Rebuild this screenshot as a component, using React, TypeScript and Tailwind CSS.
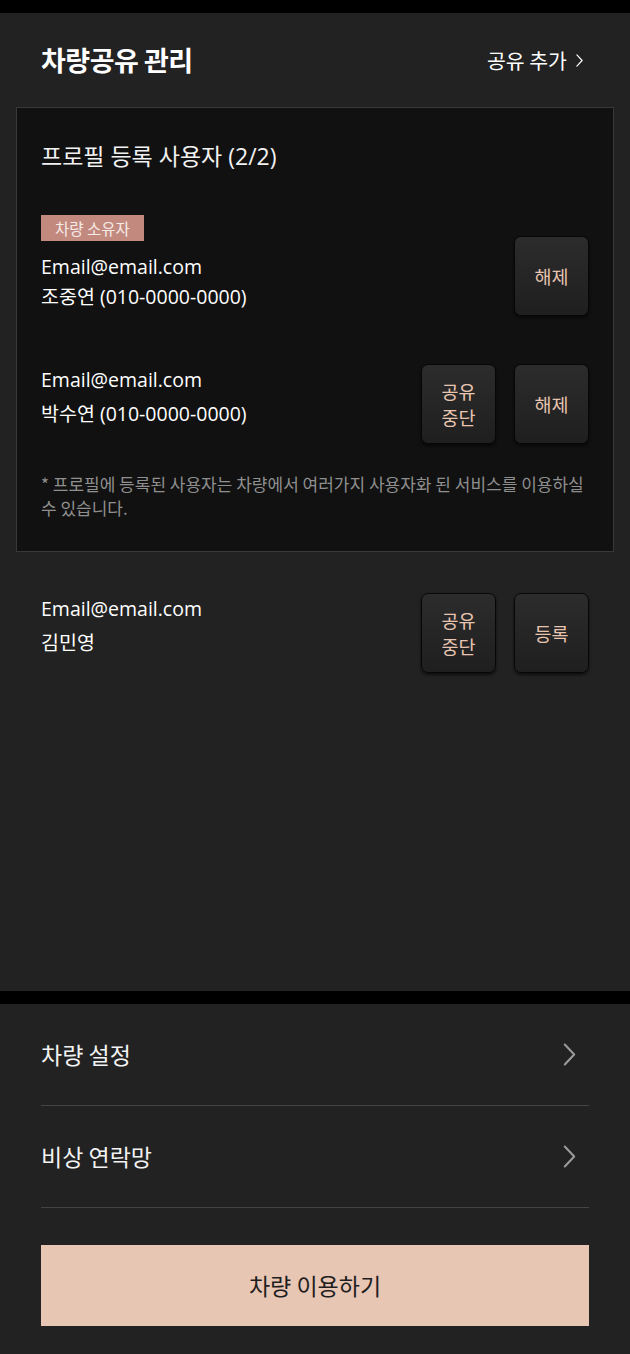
import React from "react";

const KR = { fontFamily: '"Noto Sans CJK KR", sans-serif' };
const MIX = { fontFamily: '"Open Sans", "Noto Sans CJK KR", sans-serif' };

function Btn({ lines }: { lines: string[] }) {
  return (
    <div
      className="w-[75px] h-[80px] rounded-[7px] border border-[#070707] bg-gradient-to-b from-[#2c2c2c] to-[#1f1f1f] shadow-[0_2px_3px_rgba(0,0,0,0.6)] flex flex-col items-center justify-center text-[18.5px] leading-[26px] text-[#e8c5b1]"
      style={KR}
    >
      {lines.map((l) => (
        <span key={l}>{l}</span>
      ))}
    </div>
  );
}

function Chevron({ cls }: { cls: string }) {
  return (
    <svg className={cls} viewBox="0 0 12 22" fill="none">
      <path d="M1.5 1.5 L10.5 11 L1.5 20.5" stroke="currentColor" strokeWidth="2" strokeLinecap="round" strokeLinejoin="round" />
    </svg>
  );
}

export default function App() {
  return (
    <div className="w-[630px] min-h-[1354px] bg-[#222222] text-white flex flex-col">
      <div className="h-[13px] bg-black" />
      <div className="h-[978px] bg-[#222222] flex flex-col">
        <div className="flex items-center justify-between pl-[41px] pr-[47px] pt-[29px] h-[94px] pb-[29px]">
          <h1 className="text-[27px] font-bold leading-[36px] tracking-[-0.5px]" style={KR}>
            차량공유 관리
          </h1>
          <div className="flex items-center gap-[9px] text-[20.5px] leading-[30px]" style={KR}>
            <span>공유 추가</span>
            <Chevron cls="w-[7px] h-[13px] text-white" />
          </div>
        </div>

        <div className="mx-[16px] border border-[#383838] bg-[#111111] pt-[33px] pb-[31px] px-[24px]">
          <div className="text-[23px] leading-[30px] text-[#f2f2f2]" style={MIX}>
            프로필 등록 사용자 (2/2)
          </div>

          <div className="mt-[44px] flex justify-between">
            <div className="flex flex-col">
              <span className="self-start h-[26px] px-[14px] bg-[#c28a7e] text-[15.5px] leading-[26px] text-[#f6ebe8]" style={KR}>
                차량 소유자
              </span>
              <div className="mt-[11px] text-[19.5px] leading-[30px]" style={MIX}>
                Email@email.com
              </div>
              <div className="text-[19.5px] leading-[30px]" style={MIX}>
                조중연 (010-0000-0000)
              </div>
            </div>
            <div className="mt-[21px]">
              <Btn lines={["해제"]} />
            </div>
          </div>

          <div className="mt-[48px] flex justify-between">
            <div className="flex flex-col -mt-[1px]">
              <div className="text-[19.5px] leading-[34px]" style={MIX}>
                Email@email.com
              </div>
              <div className="text-[19.5px] leading-[34px]" style={MIX}>
                박수연 (010-0000-0000)
              </div>
            </div>
            <div className="flex gap-[18px]">
              <Btn lines={["공유", "중단"]} />
              <Btn lines={["해제"]} />
            </div>
          </div>

          <p className="mt-[28px] text-[17px] leading-[24px] text-[#8f8f8f]" style={KR}>
            * 프로필에 등록된 사용자는 차량에서 여러가지 사용자화 된 서비스를 이용하실 수 있습니다.
          </p>
        </div>

        <div className="mt-[41px] px-[41px] flex justify-between">
          <div className="flex flex-col -mt-[1px]">
            <div className="text-[19.5px] leading-[34px]" style={MIX}>
              Email@email.com
            </div>
            <div className="text-[19.5px] leading-[34px]" style={MIX}>
              김민영
            </div>
          </div>
          <div className="flex gap-[18px]">
            <Btn lines={["공유", "중단"]} />
            <Btn lines={["등록"]} />
          </div>
        </div>
      </div>

      <div className="h-[13px] bg-black" />

      <div className="flex-1 bg-[#222222] px-[41px] pb-[27px] flex flex-col">
        <div className="h-[102px] border-b border-[#444444] flex items-center justify-between pr-[13px]">
          <span className="text-[23px] text-[#f2f2f2]" style={KR}>차량 설정</span>
          <Chevron cls="w-[13px] h-[23px] text-[#9a9a9a]" />
        </div>
        <div className="h-[102px] border-b border-[#444444] flex items-center justify-between pr-[13px]">
          <span className="text-[23px] text-[#f2f2f2]" style={KR}>비상 연락망</span>
          <Chevron cls="w-[13px] h-[23px] text-[#9a9a9a]" />
        </div>
        <button
          className="mt-[37px] h-[81px] w-full bg-[#e8c6b4] text-[23px] text-[#1e1e1e] flex items-center justify-center"
          style={KR}
        >
          차량 이용하기
        </button>
      </div>
    </div>
  );
}
